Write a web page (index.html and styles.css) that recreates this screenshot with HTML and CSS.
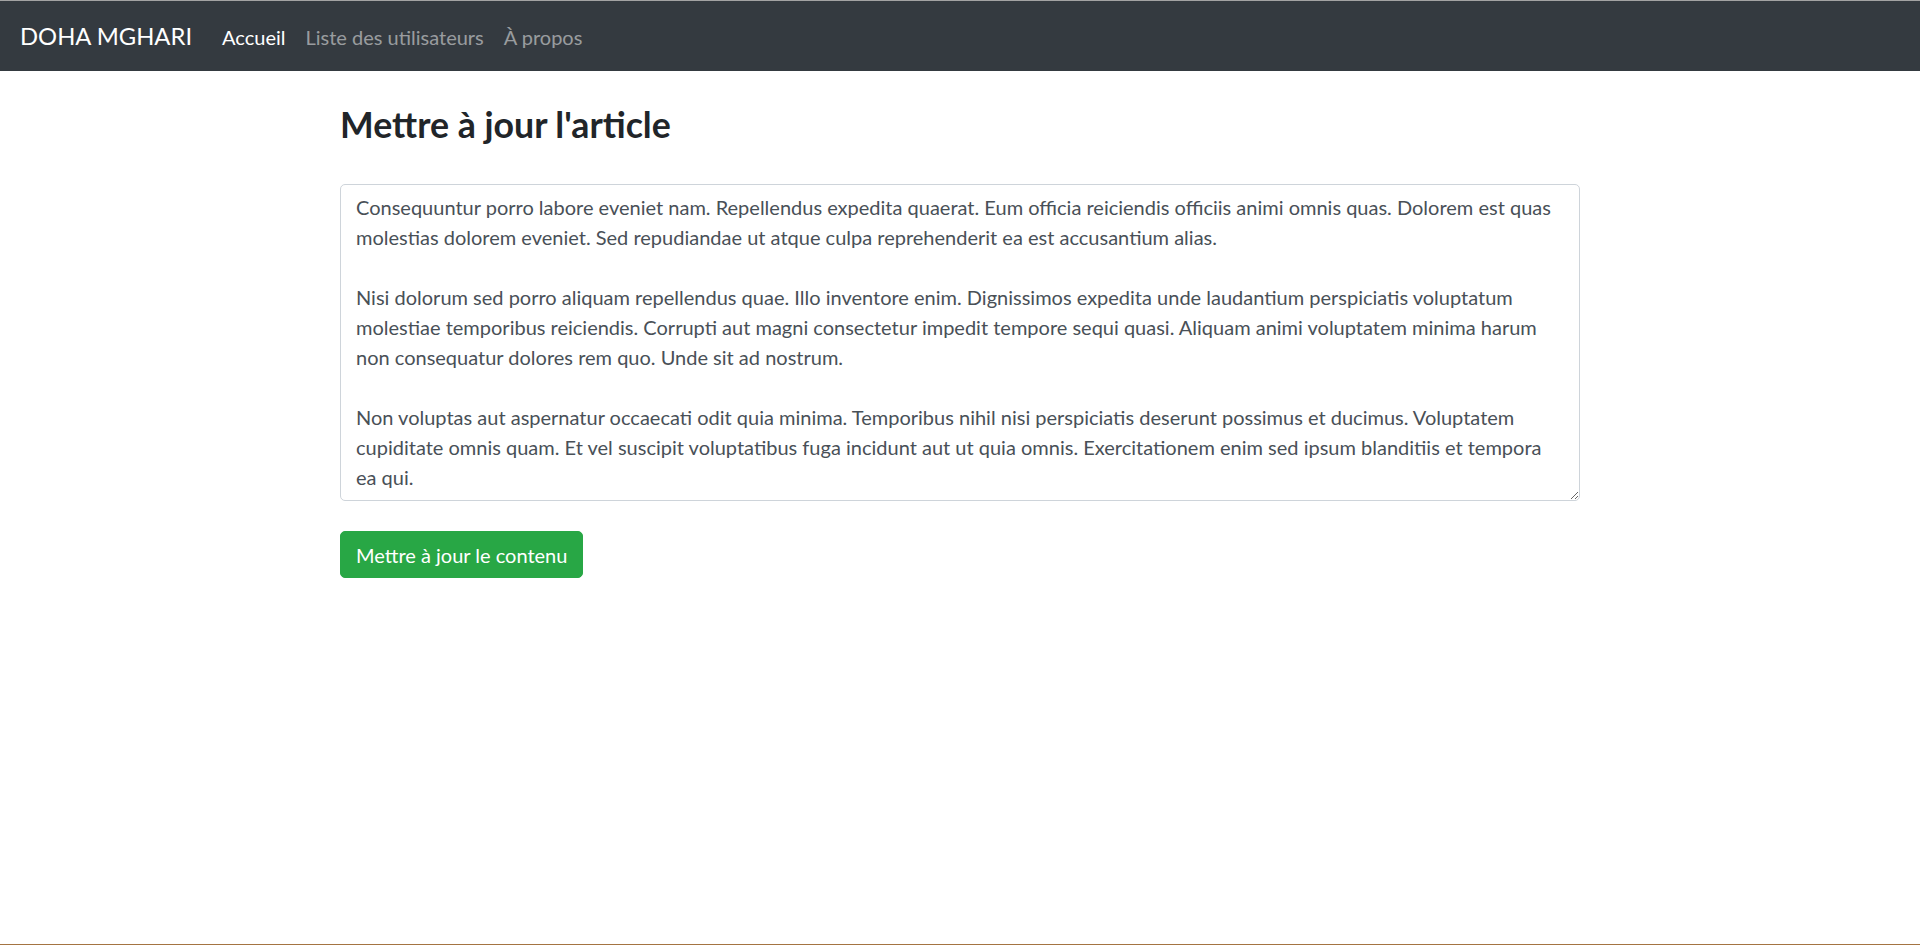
FILE: index.html
```html
<!DOCTYPE html>
<html lang="fr">
<head>
<meta charset="utf-8">
<title>Mettre à jour l'article</title>
<link rel="stylesheet" href="styles.css">
</head>
<body>
<nav class="navbar">
  <a class="brand" href="#">DOHA MGHARI</a>
  <ul class="nav">
    <li><a class="nav-link active" href="#">Accueil</a></li>
    <li><a class="nav-link" href="#">Liste des utilisateurs</a></li>
    <li><a class="nav-link" href="#">À propos</a></li>
  </ul>
</nav>
<main class="container">
  <h2 class="title">Mettre à jour l'article</h2>
  <form class="form">
    <textarea class="form-control" rows="10">Consequuntur porro labore eveniet nam. Repellendus expedita quaerat. Eum officia reiciendis officiis animi omnis quas. Dolorem est quas molestias dolorem eveniet. Sed repudiandae ut atque culpa reprehenderit ea est accusantium alias.

Nisi dolorum sed porro aliquam repellendus quae. Illo inventore enim. Dignissimos expedita unde laudantium perspiciatis voluptatum molestiae temporibus reiciendis. Corrupti aut magni consectetur impedit tempore sequi quasi. Aliquam animi voluptatem minima harum non consequatur dolores rem quo. Unde sit ad nostrum.

Non voluptas aut aspernatur occaecati odit quia minima. Temporibus nihil nisi perspiciatis deserunt possimus et ducimus. Voluptatem cupiditate omnis quam. Et vel suscipit voluptatibus fuga incidunt aut ut quia omnis. Exercitationem enim sed ipsum blanditiis et tempora ea qui.</textarea>
    <button type="submit" class="btn btn-success">Mettre à jour le contenu</button>
  </form>
</main>
</body>
</html>
```
FILE: styles.css
```css
*, *::before, *::after { box-sizing: border-box; }
html { height: 100%; }
body {
  margin: 0;
  min-height: 945px;
  font-family: "Lato", "Liberation Sans", sans-serif;
  font-size: 20px;
  line-height: 1.5;
  color: #212529;
  background: #fff;
  border-bottom: 1px solid #a47442;
}
.navbar {
  display: flex;
  align-items: center;
  height: 71px;
  padding: 0 20px;
  background: #343a40;
  border-top: 1px solid #a3a3a3;
}
.brand {
  font-size: 23.8px;
  line-height: 1.5;
  color: #fff;
  text-decoration: none;
  margin-right: 20px;
  padding: 2px 0 0 0;
  white-space: nowrap;
}
.nav {
  display: flex;
  list-style: none;
  margin: 0;
  padding: 0;
}
.nav-link {
  display: block;
  padding: 10px 10px 8px;
  font-size: 20px;
  color: rgba(255, 255, 255, 0.5);
  text-decoration: none;
}
.nav-link.active { color: #fff; }
.container {
  width: 1240px;
  margin: 0 auto;
  padding-top: 32.5px;
}
.title {
  margin: 0 0 37.5px;
  font-size: 35.7px;
  font-weight: 700;
  line-height: 1.2;
  color: #212529;
}
.form { display: flex; flex-direction: column; align-items: flex-start; }
.form-control {
  display: block;
  width: 100%;
  height: 317.5px;
  margin: 0 0 30px;
  padding: 7.5px 15px;
  font-family: "Lato", "Liberation Sans", sans-serif;
  font-size: 20px;
  line-height: 30px;
  color: #495057;
  background: #fff;
  border: 1.25px solid #ced4da;
  border-radius: 5px;
  resize: vertical;
  overflow: auto;
  scrollbar-width: none;
}
.btn {
  display: inline-block;
  padding: 7.5px 15px;
  font-family: "Lato", "Liberation Sans", sans-serif;
  font-size: 20px;
  line-height: 30px;
  color: #fff;
  border: 1.25px solid transparent;
  border-radius: 5px;
  cursor: pointer;
}
.btn-success { background: #28a745; border-color: #28a745; }
```
